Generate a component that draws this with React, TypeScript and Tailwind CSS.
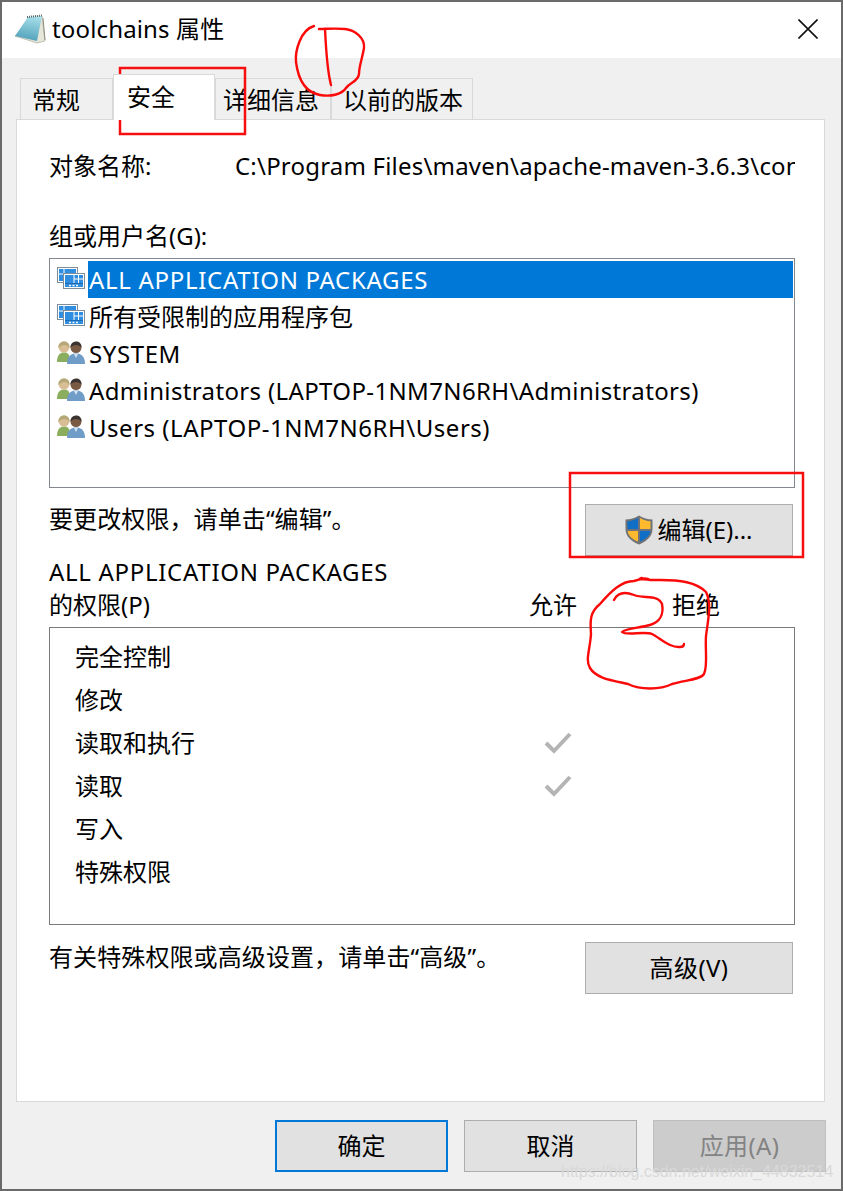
import React from "react";

const font = { fontFamily: '"Noto Sans", "Noto Sans CJK SC", sans-serif' };

function BookIcon() {
  return (
    <svg width="32" height="30" viewBox="0 0 32 30" className="shrink-0">
      <defs>
        <linearGradient id="cover" x1="0.6" y1="0" x2="0.4" y2="1">
          <stop offset="0" stopColor="#a6dfe9" />
          <stop offset="1" stopColor="#4f9fba" />
        </linearGradient>
      </defs>
      <path d="M27 2 L30 27 L22 29 L0 22 Z" fill="#e6e6da" stroke="#b3b3a4" strokeWidth="0.8" />
      <path d="M13 3 L27 2 L22 27 L0 22 Z" fill="url(#cover)" />
      <path d="M12 3 L27 1.5" stroke="#5a666a" strokeWidth="2" strokeDasharray="1 1" />
      <path d="M28 4 L30 26" stroke="#8f8f80" strokeWidth="1" />
    </svg>
  );
}

function CloseIcon() {
  return (
    <svg width="20" height="20" viewBox="0 0 20 20" className="shrink-0">
      <path d="M0.5 0.5 L19.5 19.5 M19.5 0.5 L0.5 19.5" stroke="#111" strokeWidth="1.6" fill="none" />
    </svg>
  );
}

function AppPkgIcon() {
  return (
    <svg width="28" height="22" viewBox="0 0 28 22" className="shrink-0">
      <rect x="0.5" y="0.5" width="20" height="15" fill="#fff" stroke="#7f8c99" />
      <rect x="2" y="2" width="17" height="12" fill="#2f8ee0" />
      <path d="M2 7 H7 M7 2 V14" stroke="#fff" strokeWidth="1" />
      <rect x="6.5" y="6.5" width="21" height="15" fill="#fff" stroke="#7f8c99" />
      <rect x="8" y="8" width="18" height="12" fill="#2f8ee0" />
      <path d="M17 8 V16 M21.5 8 V16 M17 12 H26" stroke="#fff" strokeWidth="1" />
      <path d="M8 16.5 H26" stroke="#1c6cb4" strokeWidth="1" />
      <path d="M12 18.5 H14 M15.5 18.5 H17.5 M19 18.5 H21" stroke="#fff" strokeWidth="1.4" />
    </svg>
  );
}

function UsersIcon() {
  return (
    <svg width="28" height="23" viewBox="0 0 28 23" className="shrink-0">
      <path d="M0 21 C0 13 4 11.5 7 11.5 C11 11.5 13 13 13 21 Z" fill="#8aae5e" />
      <circle cx="7" cy="6" r="5.5" fill="#d9bd94" />
      <path d="M1.5 7 C0.5 -1 13 -2 12.5 7 C10 3 5 3 1.5 7 Z" fill="#b5a878" />
      <circle cx="19" cy="6.5" r="5.5" fill="#7a5a42" />
      <path d="M13.5 6.5 C13.5 -1.5 25 -1.5 24.5 6.5 C22 3 16 3 13.5 6.5 Z" fill="#3a3431" />
      <path d="M10 23 C10 14.5 15 12.5 19 12.5 C24 12.5 28 15 28 23 Z" fill="#6f9dc8" />
      <path d="M17 13 L19 17 L21 13 Z" fill="#d6e4f0" />
    </svg>
  );
}

function ShieldIcon() {
  return (
    <svg width="28" height="30" viewBox="0 0 28 30" className="shrink-0">
      <path d="M14 0.5 C10 3 5 4.5 0.5 4.5 V14 C0.5 21 6 26.5 14 29.5 C22 26.5 27.5 21 27.5 14 V4.5 C23 4.5 18 3 14 0.5 Z" fill="#6f7378" />
      <path d="M13 3 C10 5 6 6 2.5 6.3 V14 H13 Z" fill="#0f6fc6" />
      <path d="M15 3 C18 5 22 6 25.5 6.3 V14 H15 Z" fill="#ffb92e" />
      <path d="M2.6 16 H13 V26.5 C7.5 24.5 3.4 21 2.6 16 Z" fill="#ffb92e" />
      <path d="M25.4 16 H15 V26.5 C20.5 24.5 24.6 21 25.4 16 Z" fill="#0f6fc6" />
    </svg>
  );
}

function CheckIcon() {
  return (
    <svg width="28" height="24" viewBox="0 0 28 24" className="shrink-0">
      <path d="M2 12 L10 20 L26 3" stroke="#b4b4b4" strokeWidth="4" fill="none" />
    </svg>
  );
}

function Tab({ label, active, className }: { label: string; active?: boolean; className: string }) {
  return (
    <div
      className={
        active
          ? `h-[46px] bg-white border-x border-t border-[#d9d9d9] -mb-px z-10 relative pl-[13px] pt-[4px] text-[24px] leading-[36px] text-black ${className}`
          : `h-[41px] bg-[#f0f0f0] border-x border-t border-[#d9d9d9] text-[24px] leading-[42px] text-black ${className}`
      }
    >
      {label}
    </div>
  );
}

function Button({ label, className, children }: { label: string; className: string; children?: React.ReactNode }) {
  return (
    <div className={`h-[52px] flex items-center justify-center text-[24px] ${className}`}>
      {children}
      <span>{label}</span>
    </div>
  );
}

function ListRow({ label, kind, selected, track }: { label: string; kind: "app" | "user"; selected?: boolean; track: string }) {
  return (
    <div className="h-[37px] flex items-center pl-[7px]">
      <div className="w-[29px] h-[28px] pb-[3px] flex items-center shrink-0">{kind === "app" ? <AppPkgIcon /> : <UsersIcon />}</div>
      <div
        className={
          selected
            ? `ml-[2px] flex-1 h-[37px] leading-[37px] pl-px bg-[#0078d7] text-white whitespace-nowrap ${track}`
            : `ml-[2px] flex-1 h-[37px] leading-[37px] pl-px text-black whitespace-nowrap ${track}`
        }
      >
        {label}
      </div>
    </div>
  );
}

function PermRow({ label, checked }: { label: string; checked?: boolean }) {
  return (
    <div className="h-[43px] flex items-center pl-[25px]">
      <span className="w-[469px]">{label}</span>
      {checked ? <CheckIcon /> : null}
    </div>
  );
}

export default function App() {
  return (
    <div className="relative w-[843px] h-[1191px] overflow-hidden border-2 border-[#6a6a6a] bg-[#f0f0f0] text-[24px] text-black" style={font}>
      <div className="h-[56px] bg-white flex items-center pl-[13px] pr-[23px] pb-[2px]">
        <BookIcon />
        <span className="ml-[5px] text-[24px] leading-[36px] tracking-[0.15px]">toolchains 属性</span>
        <span className="flex-1" />
        <CloseIcon />
      </div>

      <div className="px-[14px] pt-[16px]">
        <div className="flex items-end h-[45px] pl-[4px]">
          <Tab label="常规" className="w-[93px] pl-[11px]" />
          <Tab label="安全" active className="w-[102px]" />
          <Tab label="详细信息" className="w-[116px] pl-[7px]" />
          <Tab label="以前的版本" className="w-[142px] pl-[11px]" />
        </div>

        <div className="h-[983px] w-[809px] bg-white border border-[#d9d9d9] pl-[32px] flex flex-col">
          <div className="mt-[28px] h-[36px] flex items-center">
            <span className="w-[186px] shrink-0">对象名称:</span>
            <span className="w-[560px] overflow-hidden whitespace-nowrap tracking-[0.2px]">C:\Program Files\maven\apache-maven-3.6.3\conf</span>
          </div>

          <div className="mt-[34px] h-[36px] flex items-center">组或用户名(G):</div>

          <div className="mt-[4px] w-[746px] h-[230px] border border-[#828790] pt-[2px] pr-[1px]">
            <ListRow label="ALL APPLICATION PACKAGES" kind="app" selected track="tracking-[0.7px]" />
            <ListRow label="所有受限制的应用程序包" kind="app" track="tracking-normal" />
            <ListRow label="SYSTEM" kind="user" track="tracking-[0.6px]" />
            <ListRow label="Administrators (LAPTOP-1NM7N6RH\Administrators)" kind="user" track="tracking-[0.36px]" />
            <ListRow label="Users (LAPTOP-1NM7N6RH\Users)" kind="user" track="tracking-[0.52px]" />
          </div>

          <div className="mt-[16px] w-[744px] flex items-start justify-between">
            <span className="leading-[30px] tracking-[0.1px]">{"要更改权限\uFF0C请单击\u201C编辑\u201D\u3002"}</span>
            <Button label="编辑(E)..." className="w-[208px] bg-[#e1e1e1] border border-[#adadad]">
              <ShieldIcon />
              <span className="w-[4px]" />
            </Button>
          </div>

          <div className="-mt-[1px] h-[33px] leading-[33px] tracking-[0.7px]">ALL APPLICATION PACKAGES</div>
          <div className="h-[33px] flex items-center">
            <span className="w-[480px]">的权限(P)</span>
            <span className="w-[143px]">允许</span>
            <span>拒绝</span>
          </div>

          <div className="mt-[6px] w-[746px] h-[298px] border border-[#7a7a7a] pt-[7px]">
            <PermRow label="完全控制" />
            <PermRow label="修改" />
            <PermRow label="读取和执行" checked />
            <PermRow label="读取" checked />
            <PermRow label="写入" />
            <PermRow label="特殊权限" />
          </div>

          <div className="mt-[17px] w-[744px] flex items-start justify-between">
            <span className="leading-[30px] tracking-[0.1px]">{"有关特殊权限或高级设置\uFF0C请单击\u201C高级\u201D\u3002"}</span>
            <Button label="高级(V)" className="w-[208px] bg-[#e1e1e1] border border-[#adadad] tracking-[0.4px]" />
          </div>
        </div>

        <div className="mt-[18px] flex justify-end gap-[16px] pr-[1px]">
          <Button label="确定" className="w-[173px] bg-[#e1e1e1] border-2 border-[#0078d7]" />
          <Button label="取消" className="w-[173px] bg-[#e1e1e1] border border-[#adadad]" />
          <Button label="应用(A)" className="w-[173px] bg-[#cccccc] border border-[#bfbfbf] text-[#838383] tracking-[0.4px]" />
        </div>
      </div>

      {/* hand-drawn red annotations lying over the dialog */}
      <svg className="absolute left-[-2px] top-[-2px] pointer-events-none" width="843" height="1191" viewBox="0 0 843 1191" fill="none">
        <rect x="120" y="68" width="125" height="66" stroke="#f70f0f" strokeWidth="2.5" />
        <rect x="570" y="473" width="233" height="84" stroke="#f70f0f" strokeWidth="2.5" />
        <g stroke="#fb0a0a" strokeWidth="2.4" strokeLinecap="round" strokeLinejoin="round">
          <path d="M314 26 C300 30 295 52 296 62 C298 78 304 92 320 95 C332 97 342 94 346 88 C350 82 358 82 359 74 C359 66 362 60 364 48 C365 38 355 30 345 29 C335 28 327 29 319 29" />
          <path d="M325 29 C326 50 327 70 331 85" />
          <path d="M650 580 C646 577 640 579 634 581 C622 581 612 590 600 604 C590 612 590 620 591 634 C590 650 585 660 590 668 C596 678 610 680 628 684 C640 690 660 690 672 684 C685 680 700 680 704 674 C708 666 705 650 706 636 C708 620 712 604 706 592 C696 582 680 580 660 580 C646 580 636 579 642 578" />
          <path d="M614 600 C618 592 626 592 634 595 C644 599 658 594 662 604 C664 614 660 622 650 625 C640 628 626 628 622 632 C626 636 644 631 652 634 C660 638 670 648 680 647 C684 647 684 645 684 644" />
        </g>
      </svg>

      {/* CSDN watermark over the corner */}
      <span
        className="absolute left-[559px] top-[1158px] text-[16px] leading-[24px] text-[#d9d9d9] whitespace-nowrap"
        style={{ fontFamily: '"Liberation Sans", sans-serif' }}
      >
        https://blog.csdn.net/weixin_44832514
      </span>
    </div>
  );
}
